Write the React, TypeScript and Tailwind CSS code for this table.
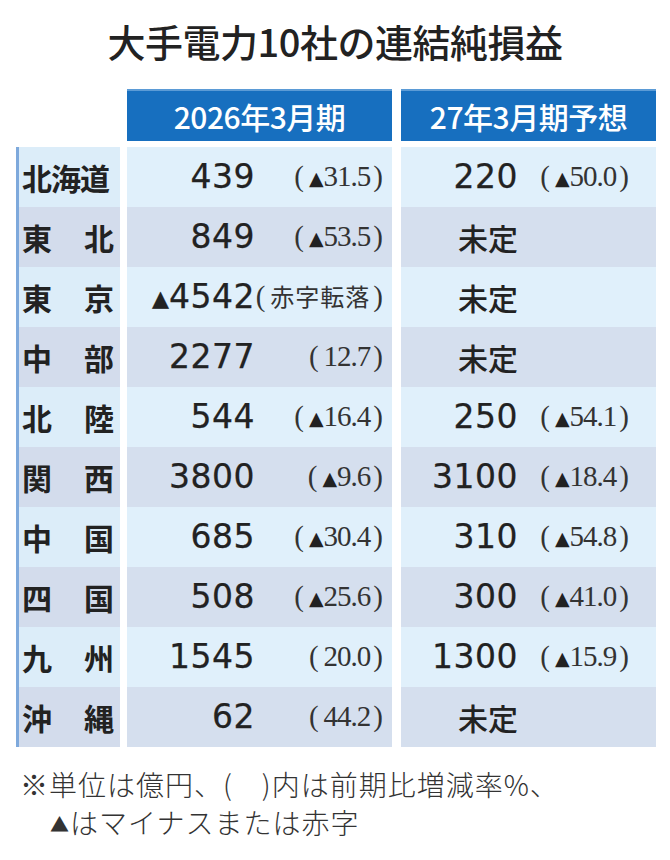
import React from 'react';

interface Row {
  name: string;
  v1: string;
  r1: string;
  v2: string;
  r2?: string;
}

const rows: Row[] = [
  { name: '北海道', v1: '439', r1: '▲31.5', v2: '220', r2: '▲50.0' },
  { name: '東北', v1: '849', r1: '▲53.5', v2: '未定' },
  { name: '東京', v1: '▲4542', r1: '赤字転落', v2: '未定' },
  { name: '中部', v1: '2277', r1: '12.7', v2: '未定' },
  { name: '北陸', v1: '544', r1: '▲16.4', v2: '250', r2: '▲54.1' },
  { name: '関西', v1: '3800', r1: '▲9.6', v2: '3100', r2: '▲18.4' },
  { name: '中国', v1: '685', r1: '▲30.4', v2: '310', r2: '▲54.8' },
  { name: '四国', v1: '508', r1: '▲25.6', v2: '300', r2: '▲41.0' },
  { name: '九州', v1: '1545', r1: '20.0', v2: '1300', r2: '▲15.9' },
  { name: '沖縄', v1: '62', r1: '44.2', v2: '未定' },
];

const Num: React.FC<{ value: string }> = ({ value }) => {
  if (value === '未定') {
    return <span className="font-['Noto_Sans_CJK_JP',sans-serif] text-[30px] font-medium">未定</span>;
  }
  const neg = value.startsWith('▲');
  return (
    <span className="font-['DejaVu_Sans',sans-serif] text-[33px] tracking-[0.5px] [-webkit-text-stroke:0.25px_#222]">
      {neg && <span className="text-[22px] tracking-normal align-[2px]">▲</span>}
      {neg ? value.slice(1) : value}
    </span>
  );
};

const Rate: React.FC<{ value: string }> = ({ value }) => {
  const neg = value.startsWith('▲');
  const body = neg ? value.slice(1) : value;
  const cjk = /[^\d.]/.test(body);
  return (
    <span className="font-['Liberation_Serif',serif] text-[29px] text-[#333] whitespace-nowrap">
      <span className="mr-[5px]">(</span>
      {neg && <span className="font-['DejaVu_Sans',sans-serif] text-[19px] align-[1px] text-[#222]">▲</span>}
      {cjk ? (
        <span className="font-['Noto_Sans_CJK_JP',sans-serif] text-[24px] tracking-[1px]">{body}</span>
      ) : (
        <span className="tracking-[-1px]">{body}</span>
      )}
      <span className="ml-[3px]">)</span>
    </span>
  );
};

const App: React.FC = () => {
  return (
    <div className="w-[670px] h-[860px] bg-white text-[#222] font-['Noto_Sans_CJK_JP',sans-serif]">
      <h1 className="pt-[21px] text-center text-[38px] leading-[40px] font-medium tracking-[-0.5px]">
        大手電力10社の連結純損益
      </h1>

      <div className="mt-[28px] pl-[16px]">
        <div className="flex h-[52px]">
          <div className="w-[104px]" />
          <div className="ml-[7px] w-[265px] bg-[#176fbf] border-t-2 border-[#5b9bd6] flex items-center justify-center text-white text-[30px] font-medium tracking-[-0.5px]">
            2026年3月期
          </div>
          <div className="ml-[9px] w-[255px] bg-[#176fbf] border-t-2 border-[#5b9bd6] flex items-center justify-center text-white text-[30px] font-medium tracking-[-0.5px]">
            27年3月期予想
          </div>
        </div>

        <div className="mt-[6px]">
          {rows.map((r, i) => {
            const bg = i % 2 === 0 ? 'bg-[#e0f0fb]' : 'bg-[#d5dfee]';
            const lbg = i % 2 === 0 ? 'bg-[#dcedf9]' : 'bg-[#d3dcec]';
            return (
              <div key={r.name} className="flex h-[60px]">
                <div className={`w-[104px] ${lbg} border-l-[3px] border-[#7ea9dc] pl-[3px] pr-[6px] flex items-center whitespace-nowrap`}>
                  {r.name.length === 3 ? (
                    <span className="text-[30px] font-bold tracking-[-1px]">{r.name}</span>
                  ) : (
                    <div className="w-full flex justify-between text-[30px] font-bold">
                      <span>{r.name[0]}</span>
                      <span>{r.name[1]}</span>
                    </div>
                  )}
                </div>
                <div className={`ml-[7px] w-[265px] ${bg} flex items-center`}>
                  <div className="w-[128px] text-right">
                    <Num value={r.v1} />
                  </div>
                  <div className="flex-1 text-right pr-[9px]">
                    <Rate value={r.r1} />
                  </div>
                </div>
                <div className={`ml-[9px] w-[255px] ${bg} flex items-center`}>
                  <div className="w-[117px] text-right">
                    <Num value={r.v2} />
                  </div>
                  <div className="flex-1 text-right pr-[27px]">
                    {r.r2 && <Rate value={r.r2} />}
                  </div>
                </div>
              </div>
            );
          })}
        </div>
      </div>

      <div className="mt-[18px] pl-[20px] text-[28px] leading-[38px] text-[#333] font-light tracking-[1px]">
        <div>※単位は億円、(　)内は前期比増減率%、</div>
        <div className="pl-[30px]">
          <span className="text-[19px] align-[2px]">▲</span>はマイナスまたは赤字
        </div>
      </div>
    </div>
  );
};

export default App;
